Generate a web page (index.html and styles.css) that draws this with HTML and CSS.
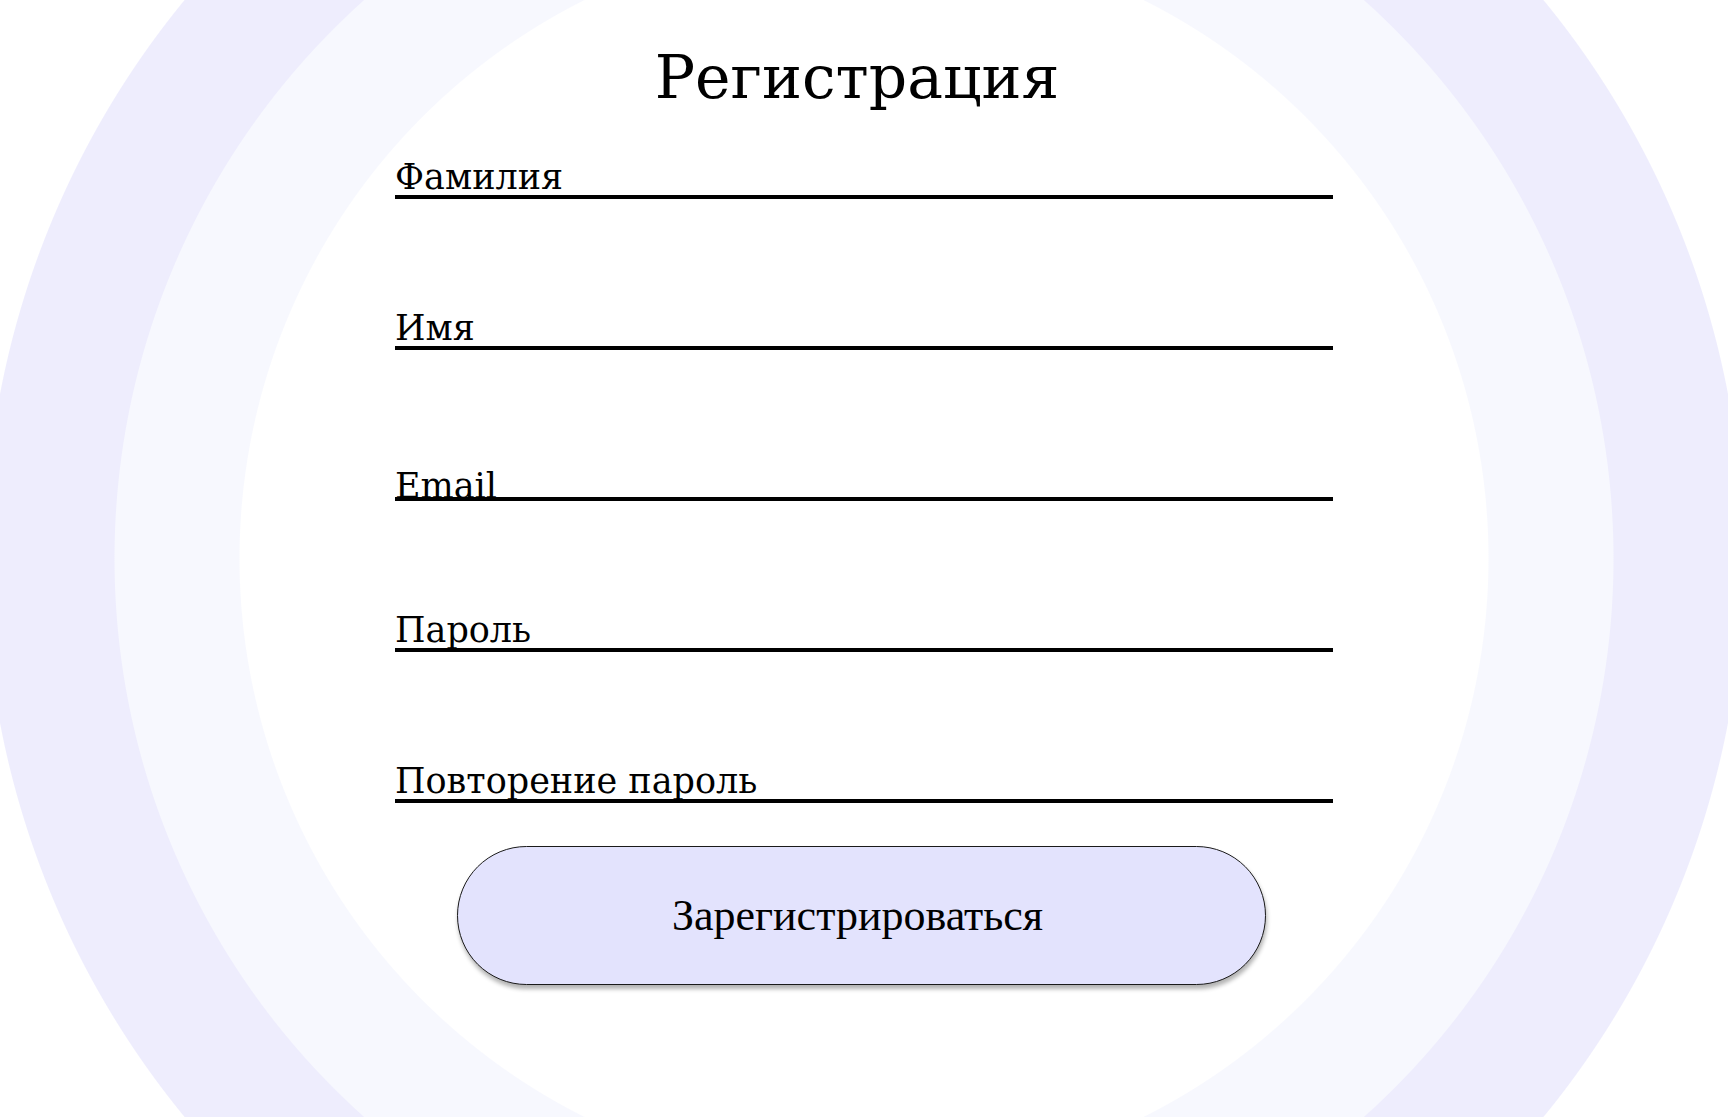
FILE: index.html
```html
<!DOCTYPE html>
<html lang="ru">
<head>
<meta charset="utf-8">
<title>Регистрация</title>
<link rel="stylesheet" href="styles.css">
</head>
<body>
<main class="page">
  <form class="form">
    <h1 class="title">Регистрация</h1>
    <div class="fields">
      <label class="field"><span class="field-label">Фамилия</span></label>
      <label class="field"><span class="field-label">Имя</span></label>
      <label class="field"><span class="field-label field-label--low">Email</span></label>
      <label class="field"><span class="field-label">Пароль</span></label>
      <label class="field"><span class="field-label">Повторение пароль</span></label>
    </div>
    <button class="submit" type="button">Зарегистрироваться</button>
  </form>
</main>
</body>
</html>
```
FILE: styles.css
```css
html, body {
  margin: 0;
  padding: 0;
}

body {
  font-family: "DejaVu Serif", "Liberation Serif", serif;
  color: #000;
  background: #fff;
}

.page {
  height: 100vh;
  overflow: hidden;
  background: radial-gradient(circle at 50% 50%,
    #ffffff 0, #ffffff 624px,
    #f7f8fe 625px, #f7f8fe 749px,
    #eeedfd 750px, #eeedfd 879px,
    #ffffff 880px);
}

.form {
  width: 938px;
  margin: 0 auto;
  padding-top: 47px;
  display: flex;
  flex-direction: column;
}

.title {
  margin: 0;
  padding-right: 14px;
  text-align: center;
  font-weight: normal;
  font-size: 60px;
  line-height: 60px;
}

.fields {
  margin-top: 53px;
  display: flex;
  flex-direction: column;
  gap: 112px;
}

.field {
  display: block;
  border-bottom: 4px solid #000;
  padding-bottom: 1px;
}

.field-label {
  display: block;
  font-size: 35px;
  line-height: 34px;
}

.field-label--low {
  margin-top: 7px;
  margin-bottom: -7px;
}

.submit {
  align-self: flex-start;
  margin-left: 62px;
  margin-top: 43px;
  width: 809px;
  height: 139px;
  border: 1px solid #1a1a1a;
  border-radius: 70px;
  background: #e3e3fd;
  box-shadow: 1px 4px 4px rgba(0, 0, 0, 0.3);
  font-family: "Liberation Serif", serif;
  font-size: 44px;
  color: #000;
  padding: 0 8px 0 0;
}
```
